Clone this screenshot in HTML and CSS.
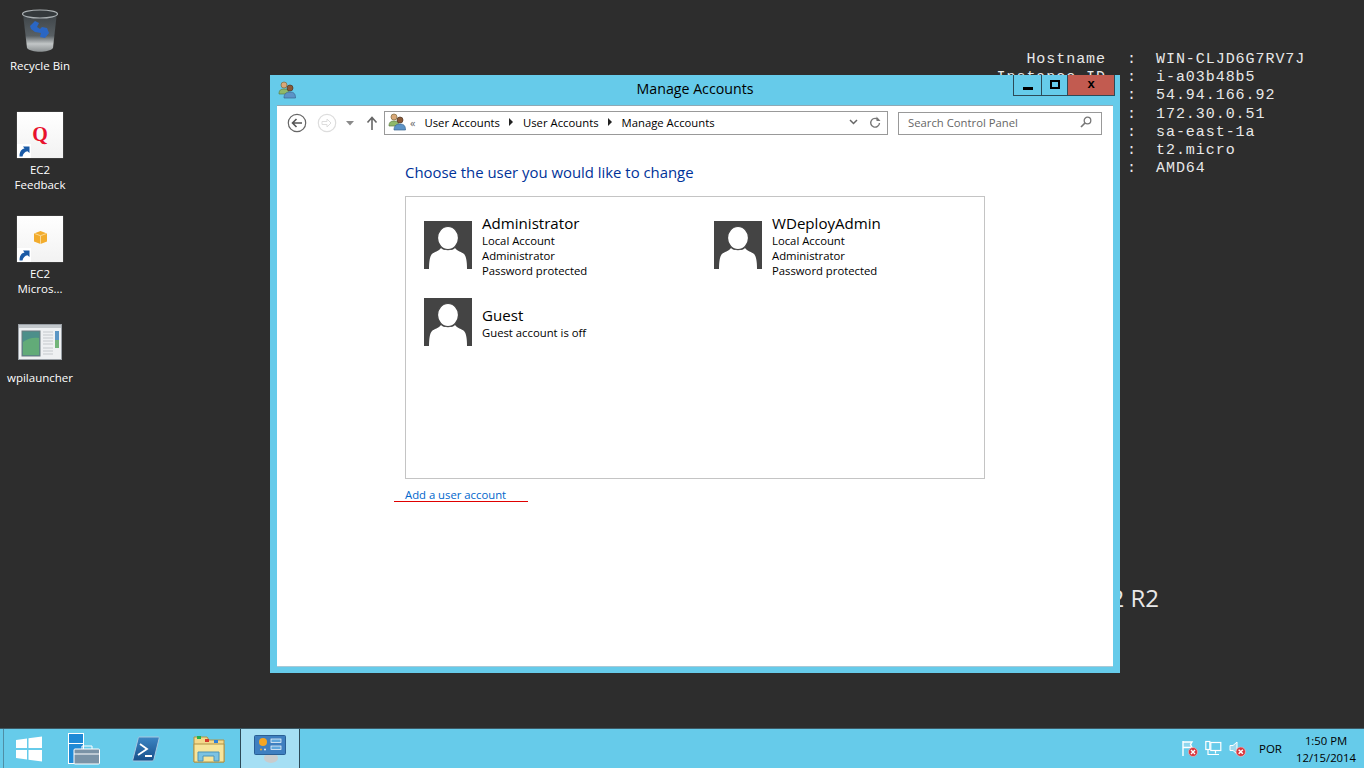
FILE: index.html
```html
<!DOCTYPE html>
<html lang="en">
<head>
  <meta charset="UTF-8">
  <title>Manage Accounts</title>
  <link rel="stylesheet" href="styles.css">
</head>
<body>
  <div class="desktop">
    <svg width="0" height="0" class="defs">
      <defs>
        <linearGradient id="binGrad" x1="0" y1="0" x2="0" y2="1">
          <stop offset="0" stop-color="#3a4044"/>
          <stop offset=".6" stop-color="#596064"/>
          <stop offset=".8" stop-color="#c2c6c7"/>
          <stop offset="1" stop-color="#8b9092"/>
        </linearGradient>
        <linearGradient id="psGrad" x1="0" y1="0" x2="0" y2="1">
          <stop offset="0" stop-color="#3c86c4"/>
          <stop offset="1" stop-color="#174f8a"/>
        </linearGradient>
        <symbol id="users" viewBox="0 0 18 18">
          <circle cx="6" cy="4" r="3" fill="#d9a878" stroke="#7c6a3c" stroke-width=".7"/>
          <path d="M1 13c0-4 2-5 5-5s5 1 5 5z" fill="#8fb86a" stroke="#5c7c45" stroke-width=".7"/>
          <circle cx="12" cy="7" r="3" fill="#8a5a38" stroke="#4f3522" stroke-width=".7"/>
          <path d="M6 17c0-4 2-6 6-6s5.500 2 5.500 6z" fill="#5b93c7" stroke="#3a6590" stroke-width=".7"/>
        </symbol>
        <symbol id="avatar" viewBox="0 0 48 48">
          <rect width="48" height="48" fill="#444"/>
          <path d="M5 48C5 40 6 35 8 33c2-2 7-3 9-6 2 3 12 3 14 0 2 3 7 4 9 6 2 2 3 7 3 15z" fill="#fff"/>
          <ellipse cx="24" cy="17" rx="10.500" ry="11.500" fill="#fff" stroke="#444" stroke-width="1.200"/>
        </symbol>
        <symbol id="shortcut" viewBox="0 0 14 14">
          <rect width="14" height="14" fill="#fff"/>
          <path d="M2.500 12.500C2.500 7.500 4.500 5 7.500 4.500L6 2.500h6.500V9L10.500 7.200C8 7.500 6 9.500 5.500 12.500z" fill="#1a5aa6"/>
        </symbol>
        <symbol id="badge" viewBox="0 0 10 10">
          <circle cx="5" cy="5" r="4.500" fill="#d9363e" stroke="#f3c7c7" stroke-width=".6"/>
          <path d="M3 3l4 4M7 3l-4 4" stroke="#fff" stroke-width="1.400"/>
        </symbol>
      </defs>
    </svg>

    <div class="desk-icon recycle">
      <svg width="36" height="44" viewBox="0 0 36 44">
        <path d="M1 5l4 34c4 5 22 5 26 0l4-36z" fill="url(#binGrad)"/>
        <ellipse cx="18" cy="5" rx="17.500" ry="4" fill="#34393c" stroke="#aab0b3" stroke-width="1.200"/>
        <path d="M8 17l5-5 4 2-2 4 3 2 2-2 5 1 2 5-4 5-5-1 1-4-6-1-4-3z" fill="#2a66c4"/>
      </svg>
      <span>Recycle Bin</span>
    </div>

    <div class="desk-icon feedback">
      <div class="tile">
        <span class="q">Q</span>
        <svg class="arrow" width="14" height="14"><use href="#shortcut"/></svg>
      </div>
      <span>EC2<br>Feedback</span>
    </div>

    <div class="desk-icon micros">
      <div class="tile">
        <svg class="box" width="15" height="15" viewBox="0 0 15 15">
          <path d="M7.500 1L14 3.500v8L7.500 14 1 11.500v-8z" fill="#f2ac2d"/>
          <path d="M1.500 3.500l6 2.200 6-2.200M7.500 5.700V14" stroke="#fbe2ad" stroke-width=".8" fill="none"/>
        </svg>
        <svg class="arrow" width="14" height="14"><use href="#shortcut"/></svg>
      </div>
      <span>EC2<br>Micros...</span>
    </div>

    <div class="desk-icon wpi">
      <svg width="44" height="36" viewBox="0 0 44 36">
        <rect x=".5" y=".5" width="43" height="35" fill="#eef0f2" stroke="#9aa0a6"/>
        <rect x="1" y="1" width="42" height="3" fill="#c3c8cc"/>
        <rect x="4" y="7" width="18" height="25" fill="#4d8f8a" stroke="#6d7a80"/>
        <path d="M5 31V18c5-4 11-5 16-4v17z" fill="#62ab78"/>
        <path d="M25 8h10M25 11h10M25 14h10M25 17h10M25 20h10M25 24h10M25 27h10M25 30h10" stroke="#c4c8cc"/>
        <rect x="37" y="7" width="4" height="9" fill="#5b96c4"/>
        <rect x="37" y="16" width="4" height="8" fill="#72b47a"/>
      </svg>
      <span>wpilauncher</span>
    </div>

    <div class="instance-info">
      <span>Hostname</span><span>:</span><span>WIN-CLJD6G7RV7J</span>
      <span>Instance ID</span><span>:</span><span>i-a03b48b5</span>
      <span></span><span>:</span><span>54.94.166.92</span>
      <span></span><span>:</span><span>172.30.0.51</span>
      <span></span><span>:</span><span>sa-east-1a</span>
      <span></span><span>:</span><span>t2.micro</span>
      <span></span><span>:</span><span>AMD64</span>
    </div>
    <div class="watermark">2 R2</div>

    <div class="window">
      <div class="titlebar">
        <svg class="title-icon" width="18" height="18"><use href="#users"/></svg>
        <div class="title-text">Manage Accounts</div>
        <div class="win-buttons">
          <div class="win-btn min"><i></i></div>
          <div class="win-btn max"><i></i></div>
          <div class="win-btn close">x</div>
        </div>
      </div>
      <div class="client">
        <div class="toolbar">
          <svg class="nav-icon" width="20" height="20" viewBox="0 0 20 20">
            <circle cx="10" cy="10" r="8.700" fill="#fff" stroke="#666" stroke-width="1.200"/>
            <path d="M15 10H5.500M9.500 6l-4 4 4 4" fill="none" stroke="#555" stroke-width="1.600"/>
          </svg>
          <svg class="nav-icon fwd" width="20" height="20" viewBox="0 0 20 20">
            <circle cx="10" cy="10" r="8.700" fill="#fff" stroke="#ddd" stroke-width="1.200"/>
            <path d="M5 8.500h5V6l4 4-4 4v-2.500H5z" fill="none" stroke="#ddd"/>
          </svg>
          <svg class="nav-icon drop" width="8" height="5" viewBox="0 0 8 5"><path d="M0 0h8L4 4.500z" fill="#8a8a8a"/></svg>
          <svg class="nav-icon up" width="12" height="14" viewBox="0 0 12 14">
            <path d="M6 14V2M1.500 6.500L6 1.500l4.500 5" fill="none" stroke="#666" stroke-width="1.600"/>
          </svg>
          <div class="address">
            <svg width="18" height="18"><use href="#users"/></svg>
            <span class="chev">&#171;</span>
            <span>User Accounts</span><i class="crumb"></i>
            <span>User Accounts</span><i class="crumb"></i>
            <span>Manage Accounts</span>
            <svg class="addr-down" width="9" height="6" viewBox="0 0 9 6"><path d="M1 1l3.500 3.500L8 1" fill="none" stroke="#666" stroke-width="1.500"/></svg>
            <svg class="refresh" width="12" height="13" viewBox="0 0 12 13">
              <path d="M9.700 4.200A4.400 4.400 0 1 0 10.500 7" fill="none" stroke="#777" stroke-width="1.400"/>
              <path d="M7.500 0.500v4.500H11.500z" fill="#777"/>
            </svg>
          </div>
          <div class="search">
            <span>Search Control Panel</span>
            <svg width="12" height="12" viewBox="0 0 12 12">
              <circle cx="7.500" cy="4.500" r="3.300" fill="none" stroke="#777" stroke-width="1.300"/>
              <path d="M5 7l-4 4" stroke="#777" stroke-width="1.700"/>
            </svg>
          </div>
        </div>

        <div class="content">
          <h1>Choose the user you would like to change</h1>
          <div class="accounts">
            <div class="account">
              <svg width="48" height="48"><use href="#avatar"/></svg>
              <div class="info"><div class="name">Administrator</div>Local Account<br>Administrator<br>Password protected</div>
            </div>
            <div class="account">
              <svg width="48" height="48"><use href="#avatar"/></svg>
              <div class="info"><div class="name">WDeployAdmin</div>Local Account<br>Administrator<br>Password protected</div>
            </div>
            <div class="account">
              <svg width="48" height="48"><use href="#avatar"/></svg>
              <div class="info"><div class="name">Guest</div>Guest account is off</div>
            </div>
          </div>
          <div class="add-link"><a href="#">Add a user account</a></div>
        </div>
      </div>
    </div>

    <div class="taskbar">
      <div class="task start">
        <svg width="28" height="27" viewBox="0 0 28 27"><path d="M1 5l11-1.500V13H1zM13.500 3.300L27 1.500V13H13.500zM1 15h11v9.500L1 23zM13.500 15H27v11.500l-13.500-1.800z" fill="#fff"/></svg>
      </div>
      <div class="task server">
        <svg width="32" height="32" viewBox="0 0 32 32">
          <rect x=".5" y=".5" width="15" height="10" fill="#1f8ad6" stroke="#fff"/>
          <rect x=".5" y="10.500" width="15" height="20" fill="#1f8ad6" stroke="#fff"/>
          <rect x="6" y="16" width="25.500" height="15" rx="1" fill="#7b93a6" stroke="#fff"/>
          <path d="M14 16v-3h10v3M6 21h25.500" fill="none" stroke="#fff"/>
        </svg>
      </div>
      <div class="task shell">
        <svg width="28" height="26" viewBox="0 0 28 26">
          <path d="M7 1h19c1 0 1.500 .5 1 2l-5 20c-.3 1.300-1 2-2 2H2c-1 0-1.500-.6-1-2L6 3c.3-1.300 .5-2 1-2z" fill="url(#psGrad)" stroke="#a8c8e0"/>
          <path d="M8 8l7 5-9 6M13 20h7" fill="none" stroke="#fff" stroke-width="1.800"/>
        </svg>
      </div>
      <div class="task explorer">
        <svg width="32" height="28" viewBox="0 0 32 28">
          <path d="M1 27V2h13l2 3h15v22z" fill="#f3d98a" stroke="#b09347"/>
          <rect x="4" y="1" width="4" height="3" fill="#22b14c"/>
          <rect x="12" y="4" width="4" height="3" fill="#d5392b"/>
          <rect x="21" y="5" width="4" height="3" fill="#2f80d8"/>
          <path d="M1 9h30v18H1z" fill="#f7e59b" stroke="#b09347"/>
          <path d="M5 26V17h21v9h-5v-5h-11v5z" fill="#7bc3e3" stroke="#4d93b5"/>
        </svg>
      </div>
      <div class="task active">
        <svg width="32" height="28" viewBox="0 0 32 28">
          <ellipse cx="17" cy="23" rx="7" ry="5" fill="#c9cccd"/>
          <rect x=".5" y=".5" width="31" height="19" rx="1" fill="#3f7fc0" stroke="#2a5f95"/>
          <circle cx="9" cy="7" r="4" fill="#f5a623"/>
          <circle cx="7" cy="14.500" r="1" fill="#f5a623"/>
          <circle cx="11" cy="14.500" r="1" fill="#e8e8e8"/>
          <rect x="17" y="4" width="10" height="3.500" fill="#5fa6dc" stroke="#fff" stroke-width=".7"/>
          <rect x="17" y="11" width="10" height="3.500" fill="#5fa6dc" stroke="#fff" stroke-width=".7"/>
        </svg>
      </div>
      <div class="tray">
        <div class="tray-icon">
          <svg width="17" height="17" viewBox="0 0 17 17">
            <path d="M2 1v15M2 2h9l-1.500 2.500L11 7.500H2" fill="#8fd6ee" stroke="#fff" stroke-width="1.400"/>
            <use href="#badge" x="7" y="7" width="10" height="10"/>
          </svg>
          <svg width="17" height="17" viewBox="0 0 17 17">
            <rect x=".8" y="1.500" width="4" height="8" fill="none" stroke="#fff" stroke-width="1.200"/>
            <rect x="5.800" y="2.500" width="10" height="8" fill="none" stroke="#fff" stroke-width="1.200"/>
            <path d="M10.500 10.500v3M7 14.500h7M3 9.500V14.500h4" fill="none" stroke="#fff" stroke-width="1.200"/>
          </svg>
          <svg width="17" height="17" viewBox="0 0 17 17">
            <path d="M1 5.500h3L8 2v12l-4-3.500H1z" fill="#9fd9ee" stroke="#fff"/>
            <use href="#badge" x="6.500" y="6.500" width="10.500" height="10.500"/>
          </svg>
        </div>
        <div class="lang">POR</div>
        <div class="clock">1:50 PM<br>12/15/2014</div>
      </div>
    </div>
  </div>
</body>
</html>
```

FILE: styles.css
```css
html, body {
  margin: 0;
  height: 100%;
}
body {
  font-family: "Open Sans", "Noto Sans", sans-serif;
  font-size: 11.3px;
  color: #000;
  background-color: #2d2d2d;
  overflow: hidden;
}
.defs {
  position: absolute;
}
.desktop {
  position: relative;
  width: 1364px;
  height: 768px;
  overflow: hidden;
}
.desk-icon {
  position: absolute;
  left: 2px;
  width: 76px;
  display: flex;
  flex-direction: column;
  align-items: center;
  color: #fff;
  text-align: center;
  line-height: 15px;
  font-size: 11.5px;
}
.recycle { top: 9px; gap: 5px; }
.feedback { top: 112px; gap: 4px; }
.micros { top: 216px; gap: 4px; }
.wpi { top: 324px; gap: 10px; }
.tile {
  position: relative;
  width: 46px;
  height: 46px;
  background: linear-gradient(#fff, #f2f2f2);
  box-shadow: 0 0 1px #888;
  display: flex;
  align-items: center;
  justify-content: center;
}
.q {
  font-family: "Liberation Serif", serif;
  font-weight: bold;
  font-size: 20px;
  line-height: 1;
  color: #e8112d;
  margin-top: -2px;
}
.arrow {
  position: absolute;
  left: 0;
  bottom: 0;
}
.box {
  margin-top: -4px;
}
.instance-info {
  position: absolute;
  left: 900px;
  right: 0;
  top: 51px;
  display: grid;
  grid-template-columns: 206px 50px 1fr;
  white-space: nowrap;
  font-family: "Liberation Mono", monospace;
  font-size: 15px;
  letter-spacing: 0.95px;
  line-height: 18.2px;
  color: #e8e8e8;
}
.instance-info span:nth-child(3n+1) {
  text-align: right;
}
.instance-info span:nth-child(3n+2) {
  padding-left: 21px;
}
.watermark {
  position: absolute;
  right: 205px;
  top: 582px;
  font-family: "Open Sans", sans-serif;
  font-size: 24px;
  line-height: 32px;
  color: #e8e8e8;
}
.window {
  position: absolute;
  left: 270px;
  top: 75px;
  width: 850px;
  height: 598px;
  background-color: #66cbea;
  display: flex;
  flex-direction: column;
}
.titlebar {
  height: 30px;
  display: flex;
  align-items: center;
  position: relative;
  flex: none;
}
.title-icon {
  margin-left: 8px;
}
.title-text {
  position: absolute;
  left: 0;
  right: 0;
  top: 4px;
  line-height: 20px;
  text-align: center;
  font-size: 14.2px;
}
.win-buttons {
  position: absolute;
  top: 0;
  right: 5px;
  display: flex;
  height: 21px;
  border: 1px solid #2c4a58;
  border-top: 0;
  box-sizing: border-box;
}
.win-btn {
  display: flex;
  align-items: center;
  justify-content: center;
  box-sizing: border-box;
  border-right: 1px solid #2c4a58;
  width: 28px;
}
.win-btn.max { width: 26px; }
.win-btn.close {
  width: 46px;
  border-right: 0;
  background-color: #c25b50;
  font-family: "Liberation Sans", sans-serif;
  font-weight: bold;
  font-size: 13px;
  padding-bottom: 3px;
}
.min i {
  display: block;
  width: 10px;
  height: 3px;
  margin-top: 6px;
  background-color: #000;
}
.max i {
  display: block;
  width: 6px;
  height: 5px;
  border: 2px solid #000;
  margin-top: -1px;
}
.client {
  flex: 1;
  margin: 0 7px 7px;
  background-color: #fff;
  border-top: 1px solid #8fa9b5;
  box-shadow: 0 1px 0 #a9c9d6;
}
.toolbar {
  display: flex;
  align-items: center;
  height: 34px;
}
.nav-icon {
  flex: none;
}
.nav-icon:first-child { margin-left: 10px; }
.fwd { margin-left: 10px; }
.drop { margin-left: 9px; }
.up { margin-left: 12px; }
.address {
  margin-left: 6px;
  width: 504px;
  height: 24px;
  box-sizing: border-box;
  border: 1px solid #999;
  display: flex;
  align-items: center;
  padding: 0 0 2px 3px;
}
.chev {
  margin: 0 9px 0 4px;
  color: #666;
  font-size: 11px;
}
.crumb {
  width: 0;
  height: 0;
  margin: 0 10px 0 9px;
  border-left: 4px solid #222;
  border-top: 4px solid transparent;
  border-bottom: 4px solid transparent;
}
.addr-down {
  margin-left: auto;
}
.refresh {
  margin: 0 6px 0 11px;
}
.search {
  margin-left: 10px;
  width: 204px;
  height: 23px;
  box-sizing: border-box;
  border: 1px solid #999;
  display: flex;
  align-items: center;
  justify-content: space-between;
  padding: 0 9px 2px;
  color: #666;
}
.content {
  padding: 22px 0 0 128px;
}
h1 {
  margin: 0 0 14px;
  font-size: 14.9px;
  line-height: 20px;
  font-weight: normal;
  color: #003399;
}
.accounts {
  width: 580px;
  height: 283px;
  box-sizing: border-box;
  border: 1px solid #c4c4c4;
  padding: 24px 18px 0;
  display: grid;
  grid-template-columns: 290px 270px;
  grid-auto-rows: 77px;
}
.account {
  display: flex;
  height: 48px;
  gap: 10px;
  align-items: center;
}
.info {
  line-height: 15px;
}
.name {
  font-size: 15.1px;
  line-height: 20px;
}
.add-link {
  width: 134px;
  margin-left: -11px;
  border-bottom: 1px solid #e00000;
  padding: 8px 0 0 11px;
  box-sizing: border-box;
  height: 23px;
  line-height: 15px;
}
.add-link a {
  color: #0066cc;
  text-decoration: none;
}
.taskbar {
  position: absolute;
  left: 0;
  right: 0;
  bottom: 0;
  height: 40px;
  box-sizing: border-box;
  background-color: #66cbea;
  border-top: 1px solid #3d5a66;
  display: flex;
  align-items: center;
  padding-left: 3px;
}
.task {
  height: 100%;
  box-sizing: border-box;
  display: flex;
  align-items: center;
  justify-content: center;
}
.task.start {
  width: 50px;
  border-left: 1px solid #4f8ea5;
}
.task.server { width: 62px; }
.task.shell { width: 62px; }
.task.explorer { width: 63px; }
.task.active {
  width: 60px;
  background-color: #a5dff4;
  border-left: 1px solid #2c4a58;
  border-right: 1px solid #2c4a58;
}
.tray {
  margin-left: auto;
  display: flex;
  align-items: center;
}
.tray-icon {
  display: flex;
  gap: 7px;
}
.lang {
  margin-left: 13px;
  width: 27px;
  font-size: 11.5px;
}
.clock {
  width: 76px;
  margin-left: 2px;
  text-align: center;
  line-height: 17px;
}
```
